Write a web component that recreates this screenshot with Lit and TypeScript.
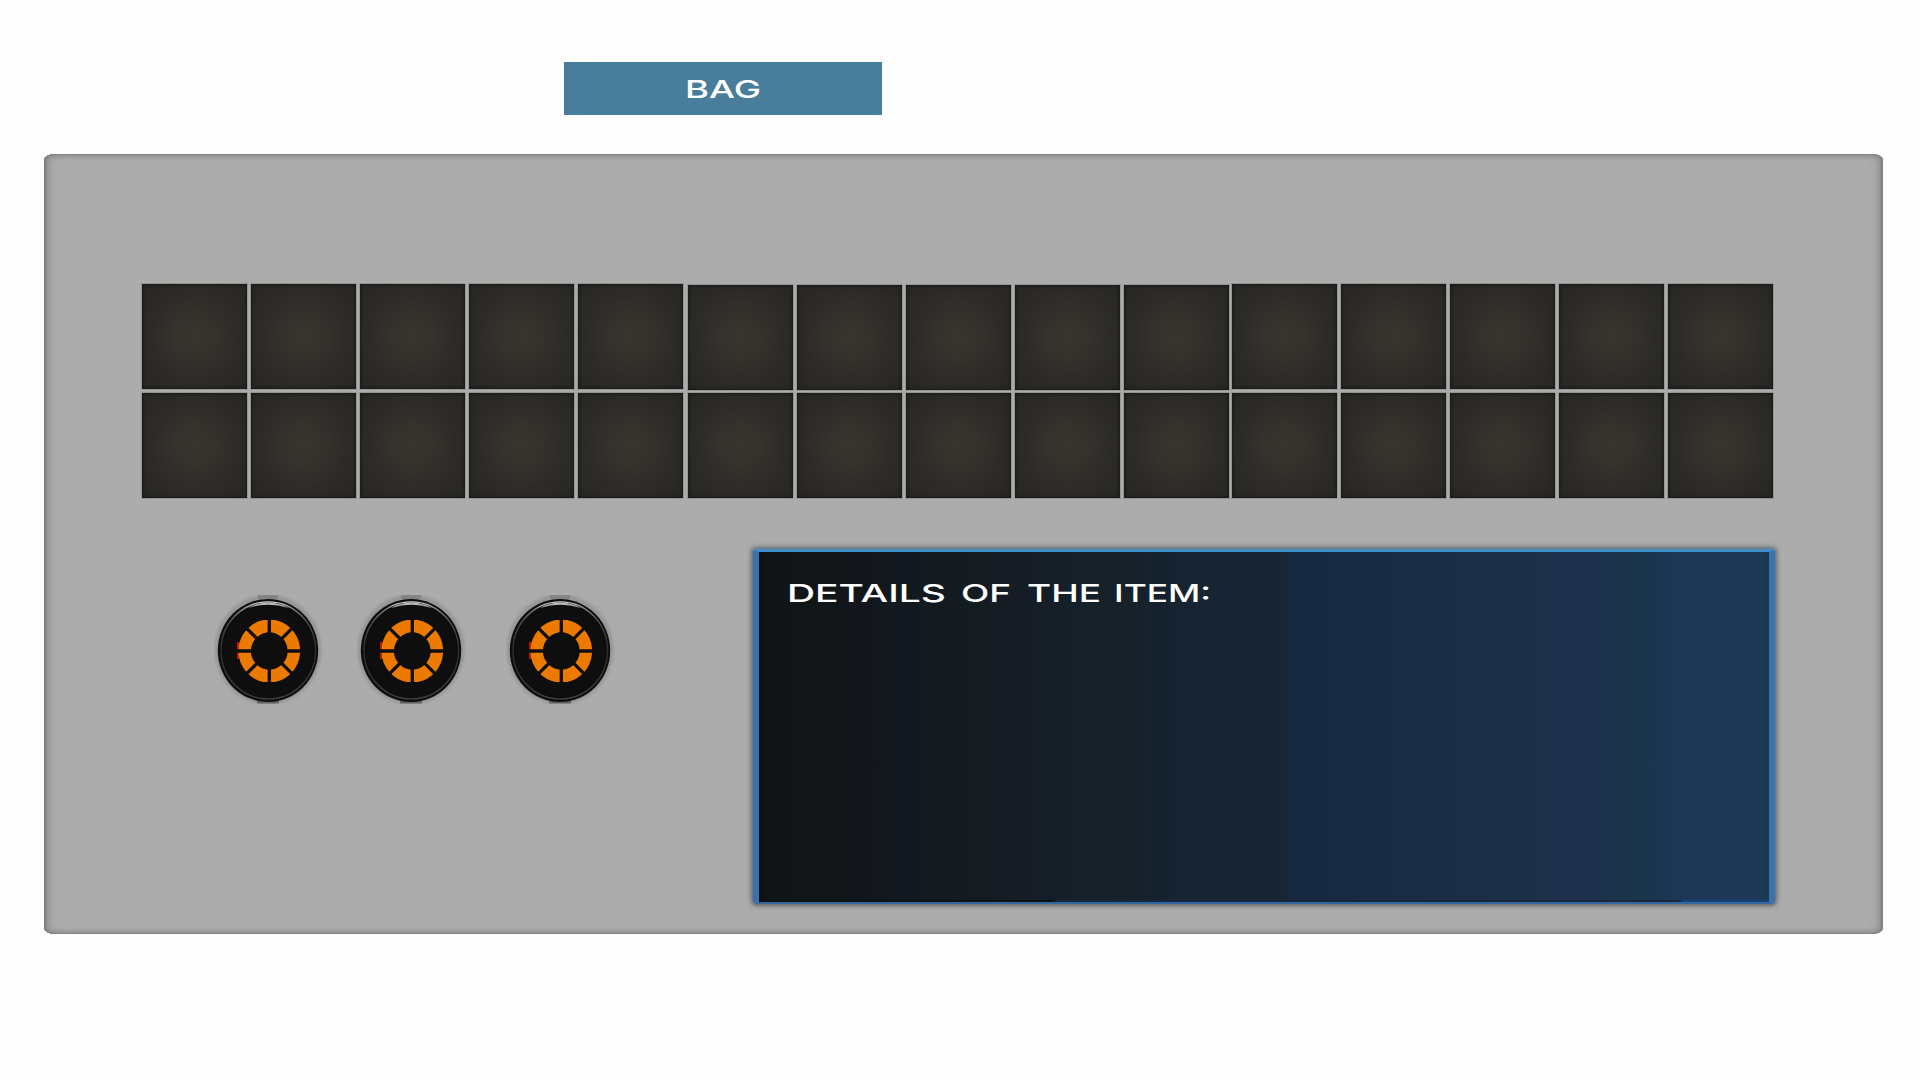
import { LitElement, html, css, svg } from "lit";
import { customElement, property } from "lit/decorators.js";

@customElement("bag-dial")
class BagDial extends LitElement {
  static styles = css`
    :host { display: block; width: 110px; height: 111px; }
    svg { display: block; }
  `;
  render() {
    return html`<svg width="110" height="111" viewBox="0 0 110 111">
      <defs>
        <linearGradient id="rim" x1="0" y1="0" x2="0" y2="1">
          <stop offset="0" stop-color="#d0d0d0"/>
          <stop offset=".07" stop-color="#8c8c8c"/>
          <stop offset=".2" stop-color="#505050"/>
          <stop offset=".5" stop-color="#2c2c2c"/>
          <stop offset="1" stop-color="#404040"/>
        </linearGradient>
        <filter id="soft" x="-20%" y="-20%" width="140%" height="140%"><feGaussianBlur stdDeviation="1.4"/></filter>
        <filter id="edge" x="-20%" y="-20%" width="140%" height="140%"><feGaussianBlur stdDeviation=".7"/></filter>
        <clipPath id="box"><rect x="0" y="0" width="109" height="109"/></clipPath>
        <clipPath id="ring"><rect x="23" y="25" width="63" height="62"/></clipPath>
      </defs>
      <g clip-path="url(#box)">
        <ellipse cx="54" cy="54.500" rx="53.5" ry="55" fill="#777" opacity=".4" filter="url(#soft)"/>
        <rect x="44" y="0" width="20" height="4" fill="#777" opacity=".6" filter="url(#edge)"/>
        <rect x="43" y="105" width="22" height="3.500" fill="#4c4c46" opacity=".7" filter="url(#edge)"/>
        <ellipse cx="54" cy="55.5" rx="50.200" ry="51.500" fill="#0d0d0d" filter="url(#edge)"/>
        <ellipse cx="54.3" cy="55.4" rx="47.300" ry="48.500" fill="none" stroke="url(#rim)" stroke-width="1.4" filter="url(#edge)"/>
        <path d="M34 13 Q54 2 75 13 Q54 6.500 34 13Z" fill="#b8b8b8" filter="url(#edge)"/>
      </g>
      <ellipse cx="54.500" cy="56.500" rx="45" ry="46" fill="#0e0e0e"/>
      <g clip-path="url(#ring)">
        <path d="M23 47h3v17h-3z" fill="#b81400" filter="url(#edge)"/>
        <ellipse cx="55.300" cy="56" rx="24.300" ry="25" fill="none" stroke="#ec7a00" stroke-width="13"/>
        ${[0, 45, 90, 135].map(
          (a) => svg`<line x1="55.300" y1="20" x2="55.300" y2="92" stroke="#0e0e0e" stroke-width="3.300" transform="rotate(${a} 55.300 56)"/>`
        )}
        <circle cx="55.300" cy="56" r="18.400" fill="#0e0e0e"/>
      </g>
    </svg>`;
  }
}

@customElement("bag-slots")
class BagSlots extends LitElement {
  static styles = css`
    :host { display: grid; grid-template-columns: repeat(5, 105px); grid-template-rows: 105px 105px; column-gap: 4px; row-gap: 4px; }
    :host([variant="low"]) { row-gap: 3px; padding-top: 1px; }
    .slot {
      background: radial-gradient(circle at 50% 50%, #38352f 0, #33322c 28%, #2c2b27 60%, #272623 100%);
      box-shadow: inset 0 0 3px 1px #181816, 0 0 0 1px rgba(80, 80, 75, .25);
    }
  `;
  @property({ reflect: true }) variant = "";
  render() {
    return html`${Array.from({ length: 10 }, () => html`<div class="slot"></div>`)}`;
  }
}

@customElement("app-root")
class AppRoot extends LitElement {
  static styles = css`
    :host {
      display: flex; flex-direction: column; box-sizing: border-box;
      width: 1920px; height: 1080px; padding: 62px 37px 0 44px;
      background: #fefefe; overflow: hidden;
    }
    .tab {
      width: 318px; height: 53px; margin-left: 520px; background: #487e9c;
      box-shadow: inset 0 0 0 1px #437c9c; flex: none;
    }
    .tab svg, .details svg { display: block; }
    text { font-family: Inter, "DejaVu Sans", sans-serif; font-size: 24.8px; font-weight: 500; fill: #fff; }
    .panel {
      box-sizing: border-box; width: 1839px; height: 780px; margin-top: 39px; padding: 130px 110px 0 98px;
      border-radius: 11px / 6px; background: #acacac; flex: none;
      box-shadow: inset 3px 0 1px -1px #808080, inset -3px 0 1px -1px #808080, inset 0 1px 0 #858585,
        inset 0 -1px 0 #858585, inset 8px 0 8px -4px #888, inset -8px 0 8px -4px #888,
        inset 0 4px 5px -2px #8c8c8c, inset 0 -4px 5px -2px #8c8c8c;
    }
    .grid { display: flex; }
    .mid { margin: 0 3px 0 5px; }
    .lower { display: flex; align-items: flex-start; margin-top: 51px; }
    .dials { display: flex; padding: 46px 0 0 72px; width: 539px; flex: none; }
    .second { margin-left: 33px; }
    .third { margin-left: 39px; }
    .details {
      box-sizing: border-box; width: 1022px; height: 355px; flex: none;
      border-style: solid; border-width: 3px 6px 2px 6px; border-color: #408fca #3972ad #3467a0 #3972ad;
      border-radius: 3px; padding: 26px 0 0 24px;
      background:
        linear-gradient(90deg, #0c1114 29%, #15253c 29.500%, #15253c 91%, #164375 91.500%) 0 100% / 100% 2px no-repeat padding-box,
        linear-gradient(90deg, #0c0f11 0, #111417 .6%, #111516 3%, #121618 7%, #12151c 11%, #131920 13%, #12181f 15.500%,
        #131a20 16%, #131c20 21%, #151c24 24%, #151d26 28%, #14202a 31%, #162028 34%, #16222b 38%, #15212f 40%,
        #172533 42%, #182634 52%, #172940 53%, #182b42 61%, #192d46 66%, #1a2f45 70%, #1a3047 76%, #1d304c 79%, #1e304e 81%,
        #1c324c 83%, #1b354b 86%, #1b354c 88%, #1d3656 90%, #1d3957 95%, #1d3957 99%, #19374d 100%) padding-box;
      box-shadow: 0 0 4px 2px rgba(70, 75, 80, .7);
    }
  `;
  render() {
    return html`
      <div class="tab">
        <svg width="318" height="53"><text x="121" y="36" textLength="76" lengthAdjust="spacingAndGlyphs">BAG</text></svg>
      </div>
      <div class="panel">
        <div class="grid">
          <bag-slots></bag-slots>
          <bag-slots class="mid" variant="low"></bag-slots>
          <bag-slots></bag-slots>
        </div>
        <div class="lower">
          <div class="dials">
            <bag-dial></bag-dial>
            <bag-dial class="second"></bag-dial>
            <bag-dial class="third"></bag-dial>
          </div>
          <div class="details">
            <svg width="480" height="50">
              <text y="24"><tspan x="4" textLength="159" lengthAdjust="spacingAndGlyphs">DETAILS</tspan> <tspan x="178" textLength="50" lengthAdjust="spacingAndGlyphs">OF</tspan> <tspan x="244" textLength="74" lengthAdjust="spacingAndGlyphs">THE</tspan> <tspan x="331" textLength="97" lengthAdjust="spacingAndGlyphs">ITEM:</tspan></text>
            </svg>
          </div>
        </div>
      </div>
    `;
  }
}
